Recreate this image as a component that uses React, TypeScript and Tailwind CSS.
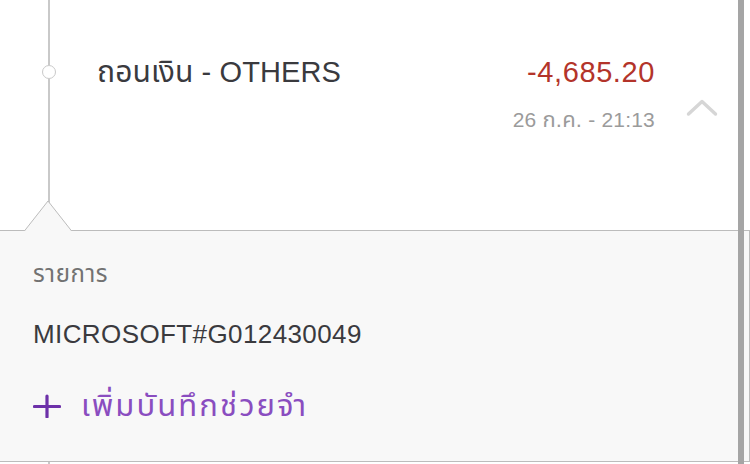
const sans = "font-['Liberation_Sans','Noto_Sans_Thai','Noto_Sans',sans-serif]"

function Chevron() {
  return (
    <svg width="32" height="20" viewBox="0 0 32 20" aria-hidden="true" className="shrink-0">
      <polyline points="2.5,17 16,4.5 29.5,17" fill="none" stroke="#d6d6d6" strokeWidth="3.4" strokeLinecap="round" strokeLinejoin="round" />
    </svg>
  )
}

function Plus() {
  return (
    <svg width="28" height="24" viewBox="0 0 28 24" aria-hidden="true" className="shrink-0">
      <path d="M1.5 12.5 H26.5 M14 2 V23" stroke="#6d31a9" strokeWidth="3.2" strokeLinecap="round" />
    </svg>
  )
}

export default function App() {
  return (
    <div className={`relative w-[750px] h-[464px] overflow-hidden bg-white ${sans}`}>
      {/* transaction row */}
      <div className="flex h-[230px]">
        {/* timeline */}
        <div className="flex w-[97px] shrink-0 flex-col items-center">
          <div className="h-[65px] w-[2px] bg-[#c9c9c9]" />
          <div className="h-[14px] w-[14px] rounded-full border-[1.5px] border-[#c9c9c9] bg-white" />
          <div className="w-[2px] flex-1 bg-[#c9c9c9]" />
        </div>

        <div className="flex flex-1 items-start justify-between pt-[56px] pr-[32px]">
          <div className="text-[29px] leading-[32px] tracking-[0.1px] text-[#3a3a3e]">
            <span className="text-[30px]">ถอนเงิน</span> - OTHERS
          </div>
          <div className="flex items-start">
            <div className="flex flex-col items-end">
              <div className="text-[29px] leading-[32px] tracking-[0.6px] text-[#b3342a]">-4,685.20</div>
              <div className="mt-[20px] text-[21px] leading-[24px] tracking-[0.2px] text-[#9b9b9b]">
                26 <span className="text-[22px]">ก.ค.</span> - 21:13
              </div>
            </div>
            <div className="ml-[31px] mt-[41px]">
              <Chevron />
            </div>
          </div>
        </div>
      </div>

      {/* detail panel */}
      <div className="relative h-[232px] border-y border-r border-[#bcbcbc] bg-[#f8f8f8] pl-[33px] pt-[29px]">
        <svg className="absolute left-[24px] top-[-31px]" width="48" height="32" viewBox="0 0 48 32" aria-hidden="true">
          <path d="M0 31.5 L24 1 L48 31.5" fill="#f8f8f8" stroke="#bcbcbc" strokeWidth="1" />
          <rect x="0" y="31" width="48" height="2" fill="#f8f8f8" />
        </svg>
        <div className="text-[24px] leading-[28px] tracking-[0.6px] text-[#727272]">รายการ</div>
        <div className="mt-[31px] text-[26px] leading-[30px] tracking-[0.4px] text-[#3a3a3e]">MICROSOFT#G012430049</div>
        <div className="mt-[41px] flex items-center gap-[20px]">
          <Plus />
          <span className="text-[31px] leading-[32px] tracking-[2.1px] text-[#8a4dc0]">เพิ่มบันทึกช่วยจำ</span>
        </div>
      </div>

      {/* timeline continues below */}
      <div className="flex w-[97px] justify-center">
        <div className="h-[4px] w-[2px] bg-[#c9c9c9]" />
      </div>

      {/* scrollbar */}
      <div className="absolute right-[6px] top-0 h-full w-[6px] bg-[#a5a5a5]" />
    </div>
  )
}
